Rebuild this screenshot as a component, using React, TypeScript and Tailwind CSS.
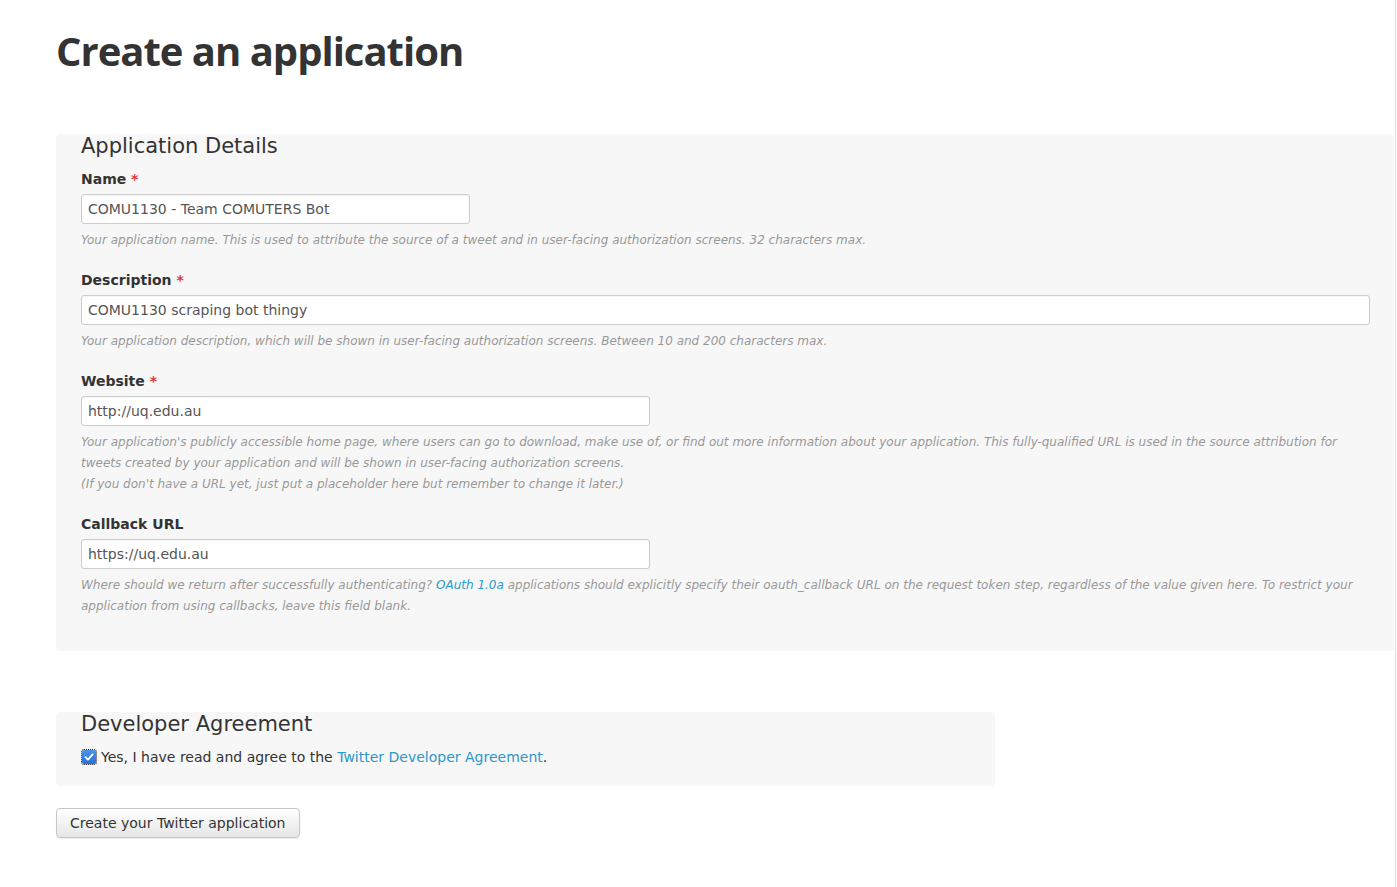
import React from 'react';

const body = { fontFamily: '"DejaVu Sans", Verdana, sans-serif' };

interface FieldProps {
    label: string;
    required?: boolean;
    value: string;
    width: string;
    children: React.ReactNode;
}

const Field: React.FC<FieldProps> = ({ label, required, value, width, children }) => (
    <div className="mb-[19px] last:mb-0">
        <div className="text-[14px] leading-[20px] font-bold text-[#333]">
            {label}
            {required && <span className="text-[#e0353b] font-bold"> *</span>}
        </div>
        <input
            readOnly
            value={value}
            className={`mt-[5px] block h-[30px] ${width} rounded-[3px] border border-[#cccccc] bg-white px-[6px] text-[14px] text-[#555] outline-none shadow-[inset_0_1px_1px_rgba(0,0,0,0.04)]`}
            style={body}
        />
        <div className="mt-[6px] text-[12px] leading-[21px] italic text-[#999]">{children}</div>
    </div>
);

export default function App() {
    return (
        <div className="min-h-screen w-[1396px] border-r border-[#dedede] bg-white pl-[56px] pr-[1px] pt-[29px] pb-[49px] text-[#333]" style={body}>
            <h1
                className="text-[40px] leading-[44px] font-bold text-[#333] tracking-[-1px]"
                style={{ fontFamily: '"Open Sans", Lato, sans-serif' }}
            >
                Create an application
            </h1>

            {/* Application details */}
            <div className="mt-[61px] rounded-[4px] bg-[#f7f7f7] pl-[25px] pr-[24px] pb-[34px]">
                <h2 className="text-[21px] leading-[24px] font-normal text-[#333] mb-[11px]">Application Details</h2>

                <Field label="Name" required value="COMU1130 - Team COMUTERS Bot" width="w-[389px]">
                    Your application name. This is used to attribute the source of a tweet and in user-facing authorization screens. 32 characters max.
                </Field>

                <Field label="Description" required value="COMU1130 scraping bot thingy" width="w-full">
                    Your application description, which will be shown in user-facing authorization screens. Between 10 and 200 characters max.
                </Field>

                <Field label="Website" required value="http://uq.edu.au" width="w-[569px]">
                    Your application's publicly accessible home page, where users can go to download, make use of, or find out more information about your application. This fully-qualified URL is used in the source attribution for tweets created by your application and will be shown in user-facing authorization screens.
                    <br />
                    (If you don't have a URL yet, just put a placeholder here but remember to change it later.)
                </Field>

                <Field label="Callback URL" value="https://uq.edu.au" width="w-[569px]">
                    Where should we return after successfully authenticating? <a className="text-[#2b97cd]">OAuth 1.0a</a> applications should explicitly specify their oauth_callback URL on the request token step, regardless of the value given here. To restrict your application from using callbacks, leave this field blank.
                </Field>
            </div>

            {/* Developer agreement */}
            <div className="mt-[61px] w-[939px] rounded-[4px] bg-[#f7f7f7] pl-[25px] pb-[19px]">
                <h2 className="text-[21px] leading-[24px] font-normal text-[#333] mb-[11px]">Developer Agreement</h2>
                <label className="flex items-center text-[14px] leading-[20px] text-[#333]">
                    <span className="mr-[5px] ml-[1px] flex h-[14px] w-[14px] items-center justify-center rounded-[2px] bg-gradient-to-b from-[#4a94e8] to-[#2b6fd0] outline outline-1 outline-dotted outline-[#1a1a1a]">
                        <svg width="10" height="10" viewBox="0 0 10 10" fill="none">
                            <path d="M1.5 5.2 L4 7.6 L8.6 2.4" stroke="white" strokeWidth="1.8" strokeLinecap="round" strokeLinejoin="round" />
                        </svg>
                    </span>
                    Yes, I have read and agree to the&nbsp;<a className="text-[#2b97cd]">Twitter Developer Agreement</a>.
                </label>
            </div>

            <button
                className="mt-[22px] h-[30px] rounded-[4px] border border-[#c6c6c6] bg-gradient-to-b from-white to-[#e6e6e6] px-[13px] text-[14px] text-[#333] shadow-[0_1px_1px_rgba(0,0,0,0.08)]"
                style={body}
            >
                Create your Twitter application
            </button>
        </div>
    );
}
